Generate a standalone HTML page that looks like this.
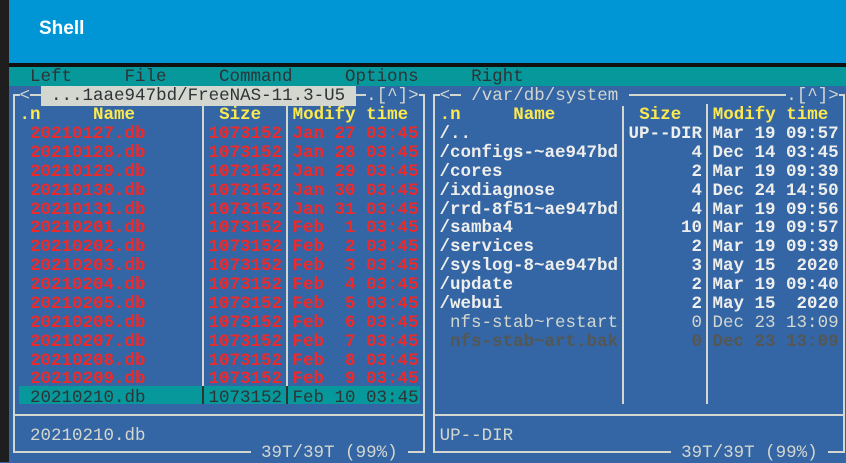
<!DOCTYPE html>
<html><head><meta charset="utf-8"><style>
*{margin:0;padding:0;box-sizing:border-box}
body{width:846px;height:462px;overflow:hidden;background:#3465a4;position:relative;font-family:"Liberation Mono",monospace;}
#strip{position:absolute;left:0;top:0;width:9px;height:462px;background:#1e1e1e}
#hdr{position:absolute;left:9px;top:0;width:837px;height:63px;background:#0095d5}
#hdr span{position:absolute;left:30px;top:18px;color:#fff;font:bold 19px "Liberation Sans",sans-serif}
#blk{position:absolute;left:9px;top:63px;width:837px;height:4px;background:#111}
#menu{position:absolute;left:9px;top:67px;width:837px;height:19px;background:#06989a}
.r{position:absolute;left:9px;white-space:pre;font-size:17.5px;line-height:19px;height:19px}
.v{position:absolute;width:2px;background:#d3d7cf}
.h{position:absolute;height:2px;background:#d3d7cf}
.y{color:#fce94f;font-weight:bold}
.red{color:#ef2929;font-weight:bold}
.w{color:#eeeeec;font-weight:bold}
.g{color:#d3d7cf}
.dg{color:#555753;font-weight:bold}
.m{color:#2e3436}
.bb{background:#3465a4}
.hl{background:#d3d7cf;color:#2e3436}
</style></head><body>
<div id="strip"></div>
<div id="hdr"><span>Shell</span></div>
<div id="blk"></div>
<div id="menu"></div>
<div class="r m" style="top:68px">  Left     File     Command     Options     Right</div>

<div class="v" style="left:13px;top:94px;height:359px"></div>
<div class="v" style="left:423px;top:94px;height:359px"></div>
<div class="v" style="left:433px;top:94px;height:359px"></div>
<div class="v" style="left:843px;top:94px;height:359px"></div>
<div class="h" style="left:13px;top:94px;width:412px"></div>
<div class="h" style="left:433px;top:94px;width:412px"></div>
<div class="h" style="left:13px;top:414px;width:412px"></div>
<div class="h" style="left:433px;top:414px;width:412px"></div>
<div class="h" style="left:13px;top:451px;width:412px"></div>
<div class="h" style="left:433px;top:451px;width:412px"></div>
<div class="v" style="left:202px;top:104px;height:282px"></div>
<div class="v" style="left:286px;top:104px;height:282px"></div>
<div class="v" style="left:622px;top:104px;height:300px"></div>
<div class="v" style="left:706px;top:104px;height:300px"></div>
<div style="position:absolute;left:19px;top:386px;width:401px;height:18px;background:#06989a"></div>
<div style="position:absolute;left:202px;top:386px;width:2px;height:18px;background:#2e3436"></div>
<div style="position:absolute;left:286px;top:386px;width:2px;height:18px;background:#2e3436"></div>

<div class="r g" style="top:87px"> <span class="bb">&lt;</span> <span class="hl"> ...1aae947bd/FreeNAS-11.3-U5 </span> <span class="bb">.[^]&gt;</span>  <span class="bb">&lt;</span> <span class="bb"> /var/db/system </span>               <span class="bb">.[^]&gt;</span></div>
<div class="r" style="top:106px"> <span class="y">.n</span>     <span class="y">Name</span>        <span class="y">Size</span>   <span class="y">Modify time</span>   <span class="y">.n</span>     <span class="y">Name</span>        <span class="y">Size</span>   <span class="y">Modify time</span></div>

<div class="r red" style="top:125px">  20210127.db      1073152 Jan 27 03:45</div>
<div class="r red" style="top:144px">  20210128.db      1073152 Jan 28 03:45</div>
<div class="r red" style="top:163px">  20210129.db      1073152 Jan 29 03:45</div>
<div class="r red" style="top:182px">  20210130.db      1073152 Jan 30 03:45</div>
<div class="r red" style="top:201px">  20210131.db      1073152 Jan 31 03:45</div>
<div class="r red" style="top:219px">  20210201.db      1073152 Feb  1 03:45</div>
<div class="r red" style="top:238px">  20210202.db      1073152 Feb  2 03:45</div>
<div class="r red" style="top:257px">  20210203.db      1073152 Feb  3 03:45</div>
<div class="r red" style="top:276px">  20210204.db      1073152 Feb  4 03:45</div>
<div class="r red" style="top:295px">  20210205.db      1073152 Feb  5 03:45</div>
<div class="r red" style="top:314px">  20210206.db      1073152 Feb  6 03:45</div>
<div class="r red" style="top:333px">  20210207.db      1073152 Feb  7 03:45</div>
<div class="r red" style="top:352px">  20210208.db      1073152 Feb  8 03:45</div>
<div class="r red" style="top:370px">  20210209.db      1073152 Feb  9 03:45</div>
<div class="r m" style="top:389px">  20210210.db      1073152 Feb 10 03:45</div>

<div class="r w" style="top:125px;left:429px"> /..               UP--DIR Mar 19 09:57</div>
<div class="r w" style="top:144px;left:429px"> /configs-~ae947bd       4 Dec 14 03:45</div>
<div class="r w" style="top:163px;left:429px"> /cores                  2 Mar 19 09:39</div>
<div class="r w" style="top:182px;left:429px"> /ixdiagnose             4 Dec 24 14:50</div>
<div class="r w" style="top:201px;left:429px"> /rrd-8f51~ae947bd       4 Mar 19 09:56</div>
<div class="r w" style="top:219px;left:429px"> /samba4                10 Mar 19 09:57</div>
<div class="r w" style="top:238px;left:429px"> /services               2 Mar 19 09:39</div>
<div class="r w" style="top:257px;left:429px"> /syslog-8~ae947bd       3 May 15  2020</div>
<div class="r w" style="top:276px;left:429px"> /update                 2 Mar 19 09:40</div>
<div class="r w" style="top:295px;left:429px"> /webui                  2 May 15  2020</div>
<div class="r g" style="top:314px;left:429px">  nfs-stab~restart       0 Dec 23 13:09</div>
<div class="r dg" style="top:333px;left:429px">  nfs-stab~art.bak       0 Dec 23 13:09</div>

<div class="r g" style="top:427px">  20210210.db                            UP--DIR</div>
<div class="r g" style="top:444px">                       <span class="bb"> 39T/39T (99%) </span>                         <span class="bb"> 39T/39T (99%) </span></div>
</body></html>
